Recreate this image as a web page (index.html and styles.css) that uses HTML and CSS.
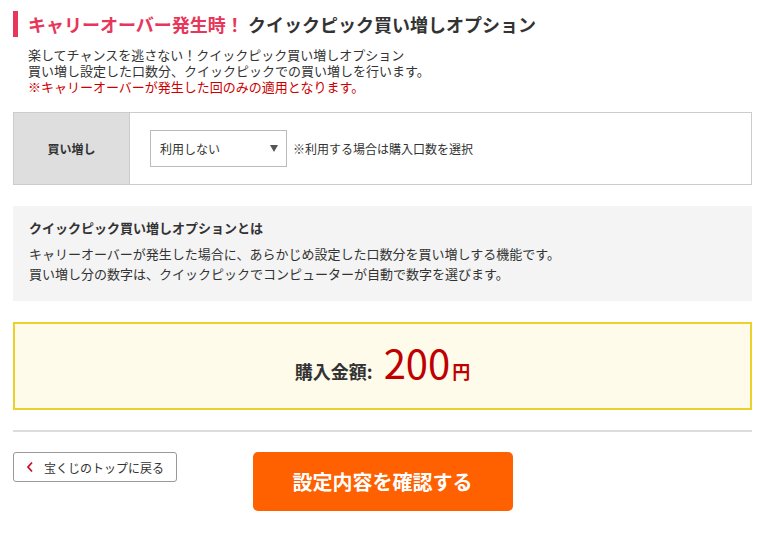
FILE: index.html
```html
<!DOCTYPE html>
<html lang="ja">
<head>
<meta charset="utf-8">
<title>クイックピック買い増しオプション</title>
<link rel="stylesheet" href="styles.css">
</head>
<body>
<div class="page">
  <h1 class="title"><span class="title-red">キャリーオーバー発生時！</span> クイックピック買い増しオプション</h1>
  <div class="lead">
    <p>楽してチャンスを逃さない！クイックピック買い増しオプション</p>
    <p>買い増し設定した口数分、クイックピックでの買い増しを行います。</p>
    <p class="lead-red">※キャリーオーバーが発生した回のみの適用となります。</p>
  </div>

  <div class="form-table">
    <div class="form-label">買い増し</div>
    <div class="form-field">
      <div class="select">
        <span class="select-text">利用しない</span>
        <span class="select-arrow"></span>
      </div>
      <span class="field-note">※利用する場合は購入口数を選択</span>
    </div>
  </div>

  <div class="info">
    <h2 class="info-title">クイックピック買い増しオプションとは</h2>
    <p>キャリーオーバーが発生した場合に、あらかじめ設定した口数分を買い増しする機能です。</p>
    <p>買い増し分の数字は、クイックピックでコンピューターが自動で数字を選びます。</p>
  </div>

  <div class="total">
    <span class="total-label">購入金額:</span>
    <span class="total-num">200</span>
    <span class="total-unit">円</span>
  </div>

  <hr class="divider">

  <div class="actions">
    <a class="back-btn" href="#">
      <svg class="chev" width="8" height="12" viewBox="0 0 8 12"><polyline points="6,1.5 2,6 6,10.5" fill="none" stroke="#c8102e" stroke-width="1.8"/></svg>
      <span>宝くじのトップに戻る</span>
    </a>
    <a class="confirm-btn" href="#">設定内容を確認する</a>
    <div></div>
  </div>
</div>
</body>
</html>
```

FILE: styles.css
```css
* { box-sizing: border-box; }
html, body { margin: 0; padding: 0; background: #fff; }
body {
  font-family: "Noto Sans CJK JP", "Noto Sans", sans-serif;
  color: #333;
}
p { margin: 0; }

.page {
  width: 739px;
  margin-left: 13px;
  padding-top: 11px;
}

.title {
  margin: 0;
  border-left: 5px solid #e8365b;
  padding-left: 10px;
  font-size: 18px;
  line-height: 26px;
  font-weight: 700;
  color: #333;
  white-space: nowrap;
}
.title-red { color: #e8365b; }

.lead {
  margin-top: 10px;
  padding-left: 15px;
  font-size: 13px;
  line-height: 16px;
  color: #333;
}
.lead-red { color: #cc0000; }

.form-table {
  margin-top: 17px;
  display: flex;
  border: 1px solid #ccc;
  height: 73px;
}
.form-label {
  width: 116px;
  background: #dedede;
  border-right: 1px solid #ccc;
  display: flex;
  align-items: center;
  justify-content: center;
  font-size: 12px;
  font-weight: 700;
  color: #333;
}
.form-field {
  flex: 1;
  display: flex;
  align-items: center;
  padding-left: 20px;
}
.select {
  width: 137px;
  height: 37px;
  border: 1px solid #bbb;
  display: flex;
  align-items: center;
  justify-content: space-between;
  padding: 0 8px 0 9px;
  background: #fff;
}
.select-text { font-size: 12px; color: #333; }
.select-arrow {
  width: 0;
  height: 0;
  border-left: 4px solid transparent;
  border-right: 4px solid transparent;
  border-top: 7px solid #555;
}
.field-note {
  margin-left: 6px;
  font-size: 12px;
  color: #333;
}

.info {
  margin-top: 21px;
  background: #f4f4f4;
  padding: 13px 16px 17px;
  font-size: 13px;
  line-height: 20px;
}
.info-title {
  margin: 0 0 7px;
  font-size: 13px;
  line-height: 18px;
  font-weight: 700;
}

.total {
  margin-top: 21px;
  height: 88px;
  border: 2px solid #ecd12a;
  background: #fffbea;
  display: flex;
  justify-content: center;
  align-items: baseline;
  padding-top: 18px;
}
.total-label {
  font-size: 18px;
  font-weight: 700;
  color: #333;
  line-height: 40px;
}
.total-num {
  margin-left: 11px;
  font-size: 40px;
  font-weight: 400;
  color: #c00000;
  line-height: 40px;
}
.total-unit {
  margin-left: 2px;
  font-size: 18px;
  font-weight: 700;
  color: #c00000;
  line-height: 40px;
}

.divider {
  margin: 20px 0 0;
  border: 0;
  height: 2px;
  background: #dcdcdc;
}

.actions {
  margin-top: 20px;
  display: grid;
  grid-template-columns: 1fr auto 1fr;
  align-items: start;
}
.back-btn {
  justify-self: start;
  width: 164px;
  height: 30px;
  border: 1px solid #999;
  border-radius: 3px;
  display: flex;
  align-items: center;
  padding-left: 12px;
  text-decoration: none;
  color: #333;
  font-size: 12px;
}
.chev { margin-right: 10px; }
.confirm-btn {
  width: 260px;
  height: 59px;
  background: #ff6000;
  border-radius: 5px;
  color: #fff;
  font-size: 20px;
  font-weight: 700;
  text-decoration: none;
  display: flex;
  align-items: center;
  justify-content: center;
}
```
